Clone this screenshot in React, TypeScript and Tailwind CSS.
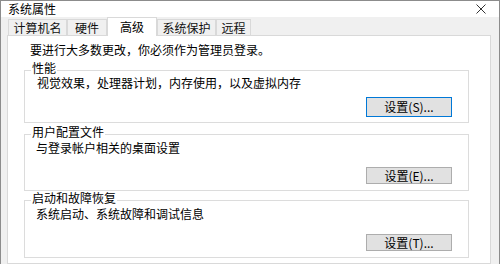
const tabs = [
  { label: '计算机名', w: 'w-[59px]' },
  { label: '硬件', w: 'w-[40px]' },
  { label: '高级', w: 'w-[50px]', active: true },
  { label: '系统保护', w: 'w-[59px]' },
  { label: '远程', w: 'w-[35px]' },
]

function SettingButton({ label, focused, h }: { label: string; focused?: boolean; h: string }) {
  return (
    <button
      className={`self-end mr-[16px] w-[86px] ${h} flex items-center justify-center text-[12px] leading-none text-black bg-[#e1e1e1] border ${
        focused ? 'border-[#0078d7]' : 'border-[#adadad]'
      }`}
    >
      {label}
    </button>
  )
}

export default function App() {
  return (
    <div className="w-[500px] h-[264px] overflow-hidden flex flex-col bg-[#f0f0f0] border-x border-t border-[#8c8c8c] text-[12px] text-black font-['Noto_Sans_CJK_SC','Noto_Sans',sans-serif]">
      {/* title bar */}
      <div className="h-[16px] shrink-0 bg-white flex items-center justify-between pl-[7px] pr-[13px]">
        <span className="leading-[16px]">系统属性</span>
        <svg width="10" height="10" viewBox="0 0 10 10" className="text-[#333]">
          <path d="M0.5 0.5 L9.5 9.5 M9.5 0.5 L0.5 9.5" stroke="currentColor" strokeWidth="1" fill="none" />
        </svg>
      </div>

      {/* tabs */}
      <div className="h-[18px] shrink-0 flex items-end pl-[7px]">
        {tabs.map(t =>
          t.active ? (
            <div key={t.label} className={`${t.w} h-[19px] -mb-px relative z-10 flex items-center justify-center bg-white border border-b-0 border-[#d9d9d9] leading-[14px]`}>
              {t.label}
            </div>
          ) : (
            <div key={t.label} className={`${t.w} h-[16px] flex items-center justify-center bg-[#f0f0f0] border border-b-0 border-[#d9d9d9] leading-[14px] text-[#111]`}>
              {t.label}
            </div>
          )
        )}
      </div>

      {/* panel */}
      <div className="ml-[6px] w-[484px] flex-1 bg-white border border-[#d9d9d9] pt-[6px] pl-[16px] pr-[21px]">
        <p className="pl-[6px] leading-[16px]">要进行大多数更改，你必须作为管理员登录。</p>

        <fieldset className="mt-[4px] border border-[#dcdcdc] flex flex-col pb-[5px]">
          <legend className="ml-[6px] px-[1px] pb-[4px] leading-[12px]">性能</legend>
          <p className="-mt-[2px] pl-[12px] leading-[14px]">视觉效果，处理器计划，内存使用，以及虚拟内存</p>
          <div className="mt-[7px] flex flex-col">
            <SettingButton label="设置(S)..." focused h="h-[20px]" />
          </div>
        </fieldset>

        <fieldset className="mt-[3px] border border-[#dcdcdc] flex flex-col pb-[6px]">
          <legend className="ml-[6px] px-[1px] pb-[4px] leading-[12px]">用户配置文件</legend>
          <p className="-mt-[1px] pl-[11px] leading-[14px]">与登录帐户相关的桌面设置</p>
          <div className="mt-[12px] flex flex-col">
            <SettingButton label="设置(E)..." h="h-[17px]" />
          </div>
        </fieldset>

        <fieldset className="mt-[1px] border border-[#dcdcdc] flex flex-col pb-[6px]">
          <legend className="ml-[6px] px-[1px] pb-[4px] leading-[12px]">启动和故障恢复</legend>
          <p className="-mt-[1px] pl-[11px] leading-[14px]">系统启动、系统故障和调试信息</p>
          <div className="mt-[13px] flex flex-col">
            <SettingButton label="设置(T)..." h="h-[17px]" />
          </div>
        </fieldset>
      </div>
    </div>
  )
}
